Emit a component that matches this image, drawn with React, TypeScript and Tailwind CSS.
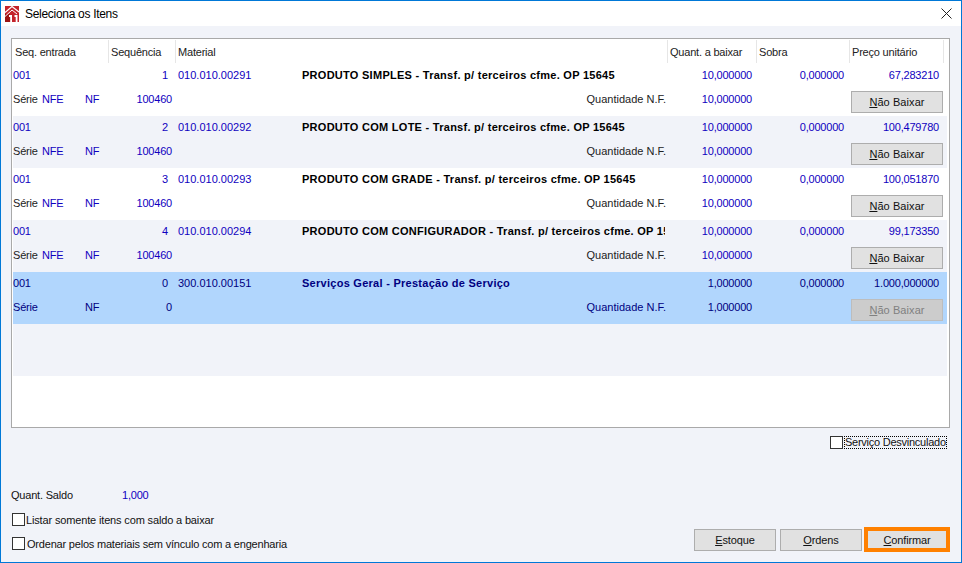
const rows = [
  { seq: "1", mat: "010.010.00291", desc: "PRODUTO SIMPLES - Transf. p/ terceiros cfme. OP 15645", qty: "10,000000", price: "67,283210", serie: "NFE", nf: "100460" },
  { seq: "2", mat: "010.010.00292", desc: "PRODUTO COM LOTE - Transf. p/ terceiros cfme. OP 15645", qty: "10,000000", price: "100,479780", serie: "NFE", nf: "100460" },
  { seq: "3", mat: "010.010.00293", desc: "PRODUTO COM GRADE - Transf. p/ terceiros cfme. OP 15645", qty: "10,000000", price: "100,051870", serie: "NFE", nf: "100460" },
  { seq: "4", mat: "010.010.00294", desc: "PRODUTO COM CONFIGURADOR - Transf. p/ terceiros cfme. OP 15645", qty: "10,000000", price: "99,173350", serie: "NFE", nf: "100460" },
  { seq: "0", mat: "300.010.00151", desc: "Serviços Geral - Prestação de Serviço", qty: "1,000000", price: "1.000,000000", serie: "", nf: "0" },
];

const headers = [
  { label: "Seq. entrada", w: "w-[96px]" },
  { label: "Sequência", w: "w-[67px]" },
  { label: "Material", w: "w-[492px]" },
  { label: "Quant. a baixar", w: "w-[89px]" },
  { label: "Sobra", w: "w-[93px]" },
  { label: "Preço unitário", w: "w-[94px]" },
];

function Logo() {
  return (
    <svg width="14" height="16" viewBox="0 0 14 16" className="shrink-0">
      <path d="M0 0 H14 V16 H0 Z" fill="#c4232b" />
      <path d="M0 16 V8 L5 8 V16 Z" fill="#9c1414" />
      <path d="M0 6.5 L7 0.5 L14 6" fill="none" stroke="#fff" strokeWidth="1.2" />
      <path d="M0 10.5 L7 4 L12 8" fill="none" stroke="#fff" strokeWidth="1" />
      <path d="M4 9h3v7H5.2v-5H4zM9.5 9h3v7h-1.8v-5H9.5z" fill="#fff" />
    </svg>
  );
}

function Check() {
  return <span className="block w-[13px] h-[13px] shrink-0 bg-white border border-[#333]" />;
}

function Btn({ children, className }: { children: React.ReactNode; className: string }) {
  return (
    <button className={"flex items-center justify-center h-[22px] border border-[#adadad] bg-[#e1e1e1] text-[#111] tracking-normal " + className}>
      {children}
    </button>
  );
}

function Row({ r, index }: { r: (typeof rows)[number]; index: number }) {
  const selected = index === 4;
  const blue = selected ? "text-[#000080]" : "text-[#1000c0]";
  const plain = selected ? "text-[#000080]" : "text-[#222]";
  const bg = selected ? "bg-[#b1d6fd]" : index % 2 === 1 ? "bg-[#f1f3f9]" : "bg-white";
  return (
    <div className={"h-[52px] " + bg}>
      <div className="flex h-[23px] items-center whitespace-nowrap">
        <span className={"w-[90px] " + blue}>001</span>
        <span className={"w-[65px] text-right " + blue}>{r.seq}</span>
        <span className={"ml-[10px] w-[124px] tracking-normal " + blue}>{r.mat}</span>
        <span className={"w-[363px] overflow-hidden font-bold tracking-[0.27px] " + (selected ? "text-[#000080]" : "text-black")}>{r.desc}</span>
        <span className={"w-[87px] text-right " + blue}>{r.qty}</span>
        <span className={"w-[92px] text-right " + blue}>0,000000</span>
        <span className={"w-[95px] text-right " + blue}>{r.price}</span>
      </div>
      <div className="flex h-[29px] items-start whitespace-nowrap leading-[24px]">
        <span className={"w-[29px] " + plain}>Série</span>
        <span className={"w-[43px] " + blue}>{r.serie}</span>
        <span className={"w-[30px] " + blue}>NF</span>
        <span className={"w-[57px] text-right " + blue}>{r.nf}</span>
        <span className={"w-[494px] text-right tracking-normal " + plain}>Quantidade N.F.</span>
        <span className={"w-[86px] text-right " + blue}>{r.qty}</span>
        <Btn className={"ml-[99px] mt-[4px] w-[92px] " + (selected ? "!bg-[#cccccc] !border-[#bdbdbd] !text-[#808080]" : "")}>
          <span className="tracking-[0.08px]"><u>N</u>ão Baixar</span>
        </Btn>
      </div>
    </div>
  );
}

export default function App() {
  return (
    <div className="w-[962px] h-[563px] flex flex-col border border-[#0078d7] bg-white font-['Liberation_Sans',sans-serif] text-[11px] tracking-[-0.2px] text-[#111]">
      <div className="h-[25px] shrink-0 flex items-center pl-[4px] pr-[9px] bg-white">
        <Logo />
        <span className="ml-[6px] text-[12px] tracking-[-0.3px] text-black">Seleciona os Itens</span>
        <svg width="11" height="11" viewBox="0 0 11 11" className="ml-auto">
          <path d="M0.5 0.5 L10.5 10.5 M10.5 0.5 L0.5 10.5" stroke="#222" strokeWidth="1" />
        </svg>
      </div>
      <div className="flex-1 flex flex-col bg-[#f1f3f9] pt-[12px] pl-[10px] pr-[11px]">
        <div className="h-[390px] shrink-0 bg-white border border-[#a9a9a9] pt-px pl-px pr-[2px]">
          <div className="flex h-[24px]">
            {headers.map((h) => (
              <div key={h.label} className={"h-[23px] flex items-center pt-px pl-[2px] border-r border-[#e6e6e6] text-[#222] whitespace-nowrap " + h.w}>
                {h.label}
              </div>
            ))}
          </div>
          {rows.map((r, i) => (
            <Row key={r.mat} r={r} index={i} />
          ))}
          <div className="h-[52px] bg-[#f1f3f9]" />
        </div>
        <div className="mt-[8px] flex justify-end pr-[3px]">
          <Check />
          <span className="ml-px w-[103px] h-[13px] leading-[11px] border border-dotted border-black whitespace-nowrap tracking-[-0.25px]">Serviço Desvinculado</span>
        </div>
        <div className="flex-1 flex items-end justify-between pb-[12px]">
          <div className="flex flex-col">
            <div className="flex h-[14px] items-center mb-[11px]">
              <span className="w-[111px]">Quant. Saldo</span>
              <span className="text-[#1000c0]">1,000</span>
            </div>
            <label className="flex items-center h-[13px] ml-px mb-[11px]">
              <Check />
              <span className="ml-px pt-[2px] tracking-[-0.15px]">Listar somente itens com saldo a baixar</span>
            </label>
            <label className="flex items-center h-[13px] ml-px">
              <Check />
              <span className="ml-[2px] pt-[2px]">Ordenar pelos materiais sem vínculo com a engenharia</span>
            </label>
          </div>
          <div className="flex items-end -mb-[2px]">
            <Btn className="w-[82px] mb-px"><span className="tracking-[-0.1px]"><u>E</u>stoque</span></Btn>
            <Btn className="w-[82px] ml-[4px] mb-px"><span className="tracking-[-0.1px]"><u>O</u>rdens</span></Btn>
            <div className="ml-[2px] border-[4px] border-[#ff8000] bg-[#e1e1e1] w-[86px] h-[25px] flex items-center justify-center pt-px tracking-[-0.15px] text-[#111]">
              <span><u>C</u>onfirmar</span>
            </div>
          </div>
        </div>
      </div>
    </div>
  );
}
